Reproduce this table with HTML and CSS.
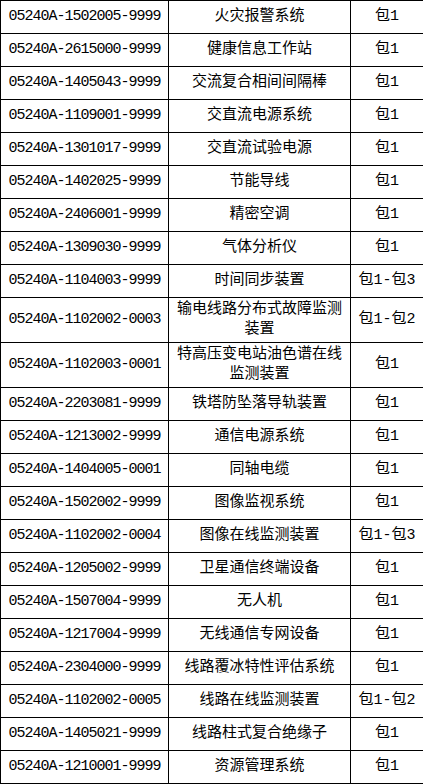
FILE: index.html
```html
<!DOCTYPE html>
<html lang="zh">
<head>
<meta charset="utf-8">
<link rel="stylesheet" href="styles.css">
</head>
<body>
<table class="list">
<colgroup><col class="c1"><col class="c2"><col class="c3"></colgroup>
<tbody>
<tr><td class="code">05240A-1502005-9999</td><td>火灾报警系统</td><td>包1</td></tr>
<tr><td class="code">05240A-2615000-9999</td><td>健康信息工作站</td><td>包1</td></tr>
<tr><td class="code">05240A-1405043-9999</td><td>交流复合相间间隔棒</td><td>包1</td></tr>
<tr><td class="code">05240A-1109001-9999</td><td>交直流电源系统</td><td>包1</td></tr>
<tr><td class="code">05240A-1301017-9999</td><td>交直流试验电源</td><td>包1</td></tr>
<tr><td class="code">05240A-1402025-9999</td><td>节能导线</td><td>包1</td></tr>
<tr><td class="code">05240A-2406001-9999</td><td>精密空调</td><td>包1</td></tr>
<tr><td class="code">05240A-1309030-9999</td><td>气体分析仪</td><td>包1</td></tr>
<tr><td class="code">05240A-1104003-9999</td><td>时间同步装置</td><td>包1-包3</td></tr>
<tr class="tall"><td class="code">05240A-1102002-0003</td><td>输电线路分布式故障监测装置</td><td>包1-包2</td></tr>
<tr class="tall"><td class="code">05240A-1102003-0001</td><td>特高压变电站油色谱在线监测装置</td><td>包1</td></tr>
<tr><td class="code">05240A-2203081-9999</td><td>铁塔防坠落导轨装置</td><td>包1</td></tr>
<tr><td class="code">05240A-1213002-9999</td><td>通信电源系统</td><td>包1</td></tr>
<tr><td class="code">05240A-1404005-0001</td><td>同轴电缆</td><td>包1</td></tr>
<tr><td class="code">05240A-1502002-9999</td><td>图像监视系统</td><td>包1</td></tr>
<tr><td class="code">05240A-1102002-0004</td><td>图像在线监测装置</td><td>包1-包3</td></tr>
<tr><td class="code">05240A-1205002-9999</td><td>卫星通信终端设备</td><td>包1</td></tr>
<tr><td class="code">05240A-1507004-9999</td><td>无人机</td><td>包1</td></tr>
<tr><td class="code">05240A-1217004-9999</td><td>无线通信专网设备</td><td>包1</td></tr>
<tr><td class="code">05240A-2304000-9999</td><td>线路覆冰特性评估系统</td><td>包1</td></tr>
<tr><td class="code">05240A-1102002-0005</td><td>线路在线监测装置</td><td>包1-包2</td></tr>
<tr><td class="code">05240A-1405021-9999</td><td>线路柱式复合绝缘子</td><td>包1</td></tr>
<tr><td class="code">05240A-1210001-9999</td><td>资源管理系统</td><td>包1</td></tr>
</tbody>
</table>
</body>
</html>
```
FILE: styles.css
```css
html, body {
  margin: 0;
  padding: 0;
  background: #fff;
}
.list {
  border-collapse: collapse;
  table-layout: fixed;
  width: 423px;
  font-family: "Liberation Mono", "Noto Sans CJK SC", monospace;
  font-size: 15px;
  color: #000;
}
.c1 { width: 168px; }
.c2 { width: 182px; }
.c3 { width: 73px; }
.list td {
  border: 1px solid #000;
  height: 33px;
  padding: 0 6px;
  text-align: center;
  vertical-align: middle;
  line-height: 20px;
  box-sizing: border-box;
  white-space: normal;
}
.list td.code {
  letter-spacing: -1px;
  white-space: nowrap;
  padding: 0 4px;
}
.list tr.tall td {
  height: 45px;
}
```
